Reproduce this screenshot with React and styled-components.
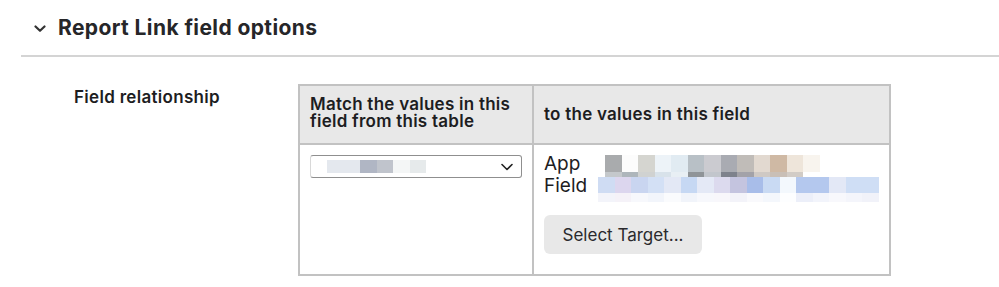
import React from 'react';
import styled, { createGlobalStyle } from 'styled-components';

const GlobalStyle = createGlobalStyle`
  html, body {
    margin: 0;
    padding: 0;
    background: #fff;
  }
  body {
    font-family: Inter, Lato, sans-serif;
    color: #1d1d1f;
  }
`;

const Page = styled.div`
  width: 999px;
  height: 287px;
  overflow: hidden;
`;

const SectionHeader = styled.div`
  display: flex;
  align-items: center;
  height: 57px;
  margin-left: 21px;
  border-bottom: 2px solid #d4d4d4;
  box-sizing: border-box;
`;

const Chevron = styled.svg`
  width: 12px;
  height: 8px;
  margin-left: 13px;
  margin-right: 12px;
  margin-top: 2px;
`;

const Title = styled.h2`
  margin: 0;
  font-size: 21px;
  font-weight: 700;
  letter-spacing: 0.4px;
  color: #262629;
`;

const Body = styled.div`
  display: flex;
  padding-top: 27px;
`;

const Label = styled.div`
  width: 224px;
  padding-left: 74px;
  padding-top: 3px;
  font-size: 17px;
  font-weight: 600;
  letter-spacing: 0.3px;
  color: #1d1d1f;
`;

const Table = styled.table`
  border-collapse: collapse;
  width: 591px;
`;

const HeadCell = styled.th`
  background: #e8e8e8;
  border: 2px solid #c2c2c2;
  text-align: left;
  vertical-align: ${(p) => (p.$middle ? 'middle' : 'top')};
  font-size: 17px;
  font-weight: 600;
  line-height: 17px;
  letter-spacing: 0.25px;
  padding: 10px;
  height: 59px;
  box-sizing: border-box;
  width: ${(p) => p.$w}px;
`;

const Cell = styled.td`
  border: 2px solid #c2c2c2;
  vertical-align: top;
  padding: 10px 10px 0 10px;
  height: 131px;
  box-sizing: border-box;
`;

const Select = styled.div`
  display: flex;
  align-items: center;
  justify-content: space-between;
  width: 212px;
  height: 23px;
  border: 1px solid #8f8f8f;
  border-left-color: #d8d8d8;
  border-radius: 3px;
  box-sizing: border-box;
  padding: 0 8px 0 16px;
`;

const Pixels = styled.div`
  display: grid;
  grid-template-columns: repeat(${(p) => p.$cols}, ${(p) => p.$cw}px);
  grid-auto-rows: ${(p) => p.$rows};
`;

const Px = styled.div``;

const FieldRow = styled.div`
  display: flex;
  align-items: flex-start;
  font-size: 19px;
  line-height: 17px;
  color: #1d1d1f;
`;

const FieldName = styled.span`
  width: ${(p) => p.$w}px;
`;

const Button = styled.button`
  margin-top: 13px;
  width: 158px;
  height: 39px;
  border: none;
  border-radius: 6px;
  background: #e8e8e8;
  font-family: Inter, Lato, sans-serif;
  font-size: 17px;
  color: #2a2a2d;
  padding: 0;
`;

function PixelBlock({ colors, cols, cw, rows }) {
  return (
    <Pixels $cols={cols} $cw={cw} $rows={rows}>
      {colors.map((c, i) => (
        <Px key={i} style={{ background: c }} />
      ))}
    </Pixels>
  );
}

const selectBlur = ['#e4e8ee', '#e4e8ee', '#b0b6c4', '#c0c4cc', '#f4f6f6', '#e6eaeb'];

const appBlur = [
  '#a9abad', '#fcfcfc', '#d5d5d0', '#edf3f8', '#e1ebf2', '#b8c0c6', '#cbcbd0', '#a9abb2', '#c0bcb8', '#e2d9d0', '#cfb9a4', '#eee5da', '#f8f4ee',
  '#c4c8cb', '#aeb6bb', '#d0d2d1', '#d8e2ea', '#e8eff4', '#8f9498', '#c2c6cc', '#7e828c', '#a3a2a8', '#cfc9c4', '#c9bfb6', '#d2ccc6', '#ffffff',
];

const fieldTop = [
  '#cfdcf3', '#dcd6ee', '#c9d5f0', '#d3e0f5', '#e3e8f5', '#c6d8f3', '#e4e9f6', '#dcdaee', '#c4c4df', '#a8bde9', '#c9daf3', '#f3f8fd', '#b4c8ee', '#b4c8ee', '#e3e8f6', '#cfdef5', '#cfdef5',
];
const fieldBottom = [
  '#f3f4fa', '#f5f2f8', '#f7f8fc', '#f2f5fb', '#fafbfd', '#f1f4fa', '#f7f8fc', '#f8f7fb', '#f3f3f9', '#f9f9fc', '#f4f7fc', '#fdfeff', '#eceff9', '#f2f4fb', '#f8f8fc', '#f4f5fb', '#f1f2f9',
];

export default function App() {
  return (
    <Page>
      <GlobalStyle />
      <SectionHeader>
        <Chevron viewBox="0 0 12 8">
          <path d="M1.5 1.5 L6 5.8 L10.5 1.5" fill="none" stroke="#333" strokeWidth="2.2" strokeLinecap="round" strokeLinejoin="round" />
        </Chevron>
        <Title>Report Link field options</Title>
      </SectionHeader>
      <Body>
        <Label>Field relationship</Label>
        <Table>
          <thead>
            <tr>
              <HeadCell $w={235}>Match the values in this field from this table</HeadCell>
              <HeadCell $w={356} $middle>to the values in this field</HeadCell>
            </tr>
          </thead>
          <tbody>
            <tr>
              <Cell>
                <Select>
                  <PixelBlock colors={selectBlur} cols={6} cw={16.5} rows="13px" />
                  <svg width="12" height="8" viewBox="0 0 12 8">
                    <path d="M1 1.5 L6 6.5 L11 1.5" fill="none" stroke="#222" strokeWidth="1.6" strokeLinecap="round" strokeLinejoin="round" />
                  </svg>
                </Select>
              </Cell>
              <Cell>
                <FieldRow>
                  <FieldName $w={61}>App</FieldName>
                  <PixelBlock colors={appBlur} cols={13} cw={16.5} rows="17px 5px" />
                </FieldRow>
                <FieldRow>
                  <FieldName $w={54}>Field</FieldName>
                  <PixelBlock colors={[...fieldTop, ...fieldBottom]} cols={17} cw={16.5} rows="16px 9px" />
                </FieldRow>
                <Button>Select Target...</Button>
              </Cell>
            </tr>
          </tbody>
        </Table>
      </Body>
    </Page>
  );
}
